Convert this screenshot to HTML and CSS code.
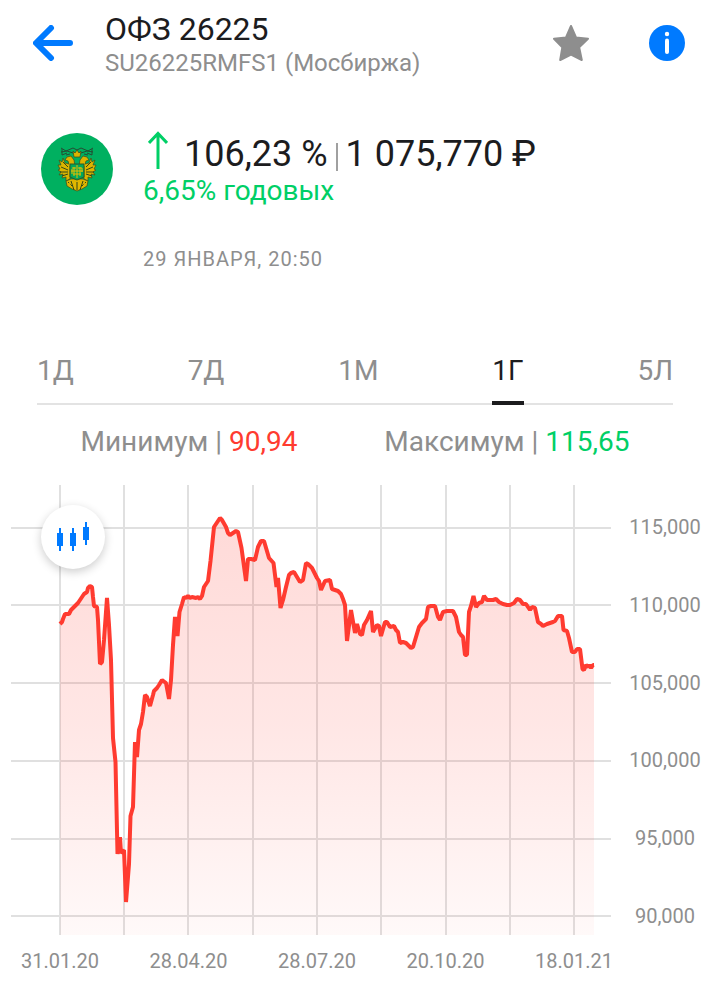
FILE: index.html
```html
<!DOCTYPE html>
<html lang="ru">
<head>
<meta charset="utf-8">
<meta name="viewport" content="width=device-width, initial-scale=1">
<title>ОФЗ 26225</title>
<link rel="stylesheet" href="styles.css">
</head>
<body>
<header class="topbar">
  <button class="icon-button" type="button" aria-label="Назад">
    <svg width="40" height="36" viewBox="0 0 40 36" fill="none" stroke="#007aff" stroke-width="6" stroke-linecap="round" stroke-linejoin="round"><path d="M37 18H4M18 3L3 18L18 33"/></svg>
  </button>
  <div class="heading">
    <h1 class="title">ОФЗ 26225</h1>
    <p class="subtitle">SU26225RMFS1 (Мосбиржа)</p>
  </div>
  <button class="icon-button" type="button" aria-label="В избранное">
    <svg width="36" height="36" viewBox="0 0 36 36" fill="#8e8e8e" stroke="#8e8e8e" stroke-width="2" stroke-linejoin="round"><path d="M18 1L23 12.5L35 13.7L26.200 22.400L28.800 35L18 29.500L7.200 35L9.300 22.400L1 13.700L13 12.500Z"/></svg>
  </button>
  <button class="icon-button info" type="button" aria-label="Информация">
    <svg width="36" height="36" viewBox="0 0 36 36"><circle cx="18" cy="18" r="18" fill="#007aff"/><circle cx="18" cy="9" r="2.200" fill="#fff"/><path d="M18 15.500V27" stroke="#fff" stroke-width="4" stroke-linecap="round"/></svg>
  </button>
</header>

<main>
  <section class="quote">
    <svg class="emblem" width="72" height="72" viewBox="0 0 72 72" aria-hidden="true">
      <circle cx="36" cy="36" r="36" fill="#00b060"/>
      <path d="M20 15L25 18L32 15L36 17L40 15L47 18L52 15M20 19L26 18L32 20H40L46 18L52 19M21 16V22L26 20M51 16V22L46 20M25 22L29 21M43 21L47 22" fill="none" stroke="#254c32" stroke-width="1"/>
      <g fill="#dcb400" stroke="#3f4a18" stroke-width=".7">
        <path d="M32 18L34 20L36 17L38 20L40 18L39 24H33Z"/>
        <path d="M34 33L33 27L30 23L26 24L24 27L27 28L28 31L24 30L22 25L21 29L18 27L20 32L17 32L19 36L17 37L20 39L18 42L22 41L21 45L25 44L25 48L29 46V33Z"/>
        <path d="M38 33L39 27L42 23L46 24L48 27L45 28L44 31L48 30L50 25L51 29L54 27L52 32L55 32L53 36L55 37L52 39L54 42L50 41L51 45L47 44L47 48L43 46V33Z"/>
        <path d="M25 48L30 46H42L47 48L46 53L41 56L36 58L31 56L26 53Z"/>
      </g>
      <path d="M20 34L27 37M19 39L27 39M21 43L27 41M22 29L27 34M52 34L45 37M53 39L45 39M51 43L45 41M50 29L45 34M27 49L31 53M45 49L41 53M30 48L33 57M42 48L39 57M36 49V57" fill="none" stroke="#344818" stroke-width="1"/>
      <path d="M29 31H43V44L36 47L29 44Z" fill="#00a85a" stroke="#2d5a2a"/>
      <path d="M36 32V45M33 34V43M39 34V43M31 36V41M30 38H42M31 35H35M37 35H41V39M32 41H40M28 50L31 55M34 49L34 56M38 49V56M44 50L41 55" fill="none" stroke="#e8bd00" stroke-width="1"/>
    </svg>
    <div class="figures">
      <p class="price">
        <svg class="rise" width="20" height="38" viewBox="0 0 20 38" fill="none" stroke="#00cf66" stroke-width="3" role="img" aria-label="Рост"><path d="M10 38V3M1 12L10 2.500L19 12"/></svg>
        <span>106,23 %</span><span class="bar"></span><span>1 075,770 ₽</span>
      </p>
      <p class="yield">6,65% годовых</p>
      <p class="stamp">29 ЯНВАРЯ, 20:50</p>
    </div>
  </section>

  <nav class="tabs" aria-label="Период">
    <button class="tab" type="button">1Д</button>
    <button class="tab" type="button">7Д</button>
    <button class="tab" type="button">1М</button>
    <button class="tab active" type="button" aria-current="true">1Г</button>
    <button class="tab" type="button">5Л</button>
  </nav>

  <div class="range">
    <p>Минимум | <span class="low">90,94</span></p>
    <p>Максимум | <span class="high">115,65</span></p>
  </div>

  <section class="chart">
    <div class="plot">
      <svg class="lines" viewBox="11 485 600 450" role="img" aria-label="График за год">
        <defs>
          <linearGradient id="fade" gradientUnits="userSpaceOnUse" x1="0" y1="515" x2="0" y2="935"><stop offset="0" stop-color="#ff3b30" stop-opacity=".19"/><stop offset=".5" stop-color="#ff3b30" stop-opacity=".125"/><stop offset="1" stop-color="#ff3b30" stop-opacity=".03"/></linearGradient>
        </defs>
        <path d="M11 528H611M11 605H611M11 683H611M11 761H611M11 839H611M11 916H611M60 485V935M124 485V935M188 485V935M253 485V935M317 485V935M381 485V935M446 485V935M510 485V935M574 485V935" stroke="#e0e0e0" stroke-width="2"/>
        <path id="area" fill="url(#fade)"/>
        <path id="trend" fill="none" stroke="#ff3b30" stroke-width="4" stroke-linejoin="bevel"/>
      </svg>
      <button class="mode" type="button" aria-label="Свечной график">
        <svg width="34" height="32" viewBox="0 0 34 32" fill="#007aff"><path d="M3 7h2v5h2v13h-2v5h-2v-5h-2v-13h2zM16 7h2v5h2v13h-2v5h-2v-5h-2v-13h2zM29 1h2v5h2v13h-2v5h-2v-5h-2v-13h2z"/></svg>
      </button>
    </div>
    <div class="y-axis"><span>115,000</span><span>110,000</span><span>105,000</span><span>100,000</span><span>95,000</span><span>90,000</span></div>
    <div class="x-axis"><span>31.01.20</span><span>28.04.20</span><span>28.07.20</span><span>20.10.20</span><span>18.01.21</span></div>
  </section>
</main>
<script src="chart.js"></script>
</body>
</html>
```
FILE: styles.css
```css
* { box-sizing: border-box; }
body { margin: 0; background: #fff; color: #1c1c1e; font-family: Roboto, "Noto Sans", sans-serif; }
h1, p { margin: 0; font-weight: 400; }
button { padding: 0; border: 0; background: none; color: inherit; font: inherit; cursor: pointer; }
svg { display: block; }

.topbar { display: flex; align-items: flex-start; padding: 12px 28px 8px 33px; }
.heading { flex: 1; padding-left: 32px; }
.title { font-size: 32px; line-height: 35px; }
.subtitle { font-size: 24px; line-height: 32px; color: #8e8e8e; }
.icon-button { flex: none; margin-top: 13px; }
.info { margin-left: 60px; }

.quote { display: flex; gap: 30px; padding: 46px 40px 0 41px; }
.emblem { flex: none; }
.price { display: flex; align-items: flex-start; font-size: 36px; line-height: 42px; }
.rise { flex: none; margin: -2px 16px 0 5px; }
.bar { width: 2px; height: 28px; margin: 10px 8px 0; background: #a0a0a0; }
.yield { font-size: 28px; line-height: 32px; color: #00cf66; }
.stamp { margin-top: 40px; font-size: 20px; line-height: 24px; letter-spacing: 1px; color: #8e8e8e; }

.tabs { display: flex; justify-content: space-between; margin: 80px 40px 0 37px; border-bottom: 2px solid #e3e3e3; }
.tab { height: 54px; margin-bottom: -2px; padding-bottom: 10px; border-bottom: 4px solid transparent; font-size: 28px; line-height: 34px; color: #8e8e8e; }
.tab.active { border-color: #1c1c1e; color: #1c1c1e; }

.range { display: flex; justify-content: space-around; margin: 20px 40px 26px 37px; font-size: 28px; line-height: 34px; color: #8e8e8e; }
.low { color: #ff3b30; }
.high { color: #00cf66; }

.chart { display: grid; grid-template-columns: 1fr 102px; padding-left: 11px; font-size: 20px; line-height: 24px; color: #8e8e8e; }
.plot { position: relative; }
.lines { width: 100%; height: auto; }
.mode { position: absolute; top: 20px; left: 30px; display: grid; place-items: center; width: 64px; height: 64px; border-radius: 50%; background: #fff; box-shadow: 0 3px 10px rgba(0, 0, 0, .2); }
.y-axis { display: flex; flex-direction: column; justify-content: space-between; align-items: center; padding: 30px 0 7px 6px; }
.x-axis { display: flex; justify-content: space-between; margin-right: -2px; padding: 14px 0 16px 10px; }
```
FILE: chart.js
```js
const points = [
  60,624, 62,622, 63,619, 65,614, 69,614, 71,610, 73,608, 76,605, 78,603, 80,600, 82,597, 84,594, 87,592, 88,588, 90,586, 92,587, 93,597, 94,606, 97,607, 98,620, 100,664, 102,662, 104,640, 107,598, 109,625, 111,660,
  113,738, 115.5,762, 117.5,854, 120,837, 121,853, 124,850, 126,902, 129,864, 130.5,816, 133,807, 135,742, 137,757, 139,730, 141,724, 143,712, 145,695, 147,697, 150,706, 153,695, 154,691, 157,688, 159,685, 162,680, 166,683, 169,699, 171,680, 173,645, 175,617, 177.500,636, 179.500,612, 182,604, 184,597,
  186,598, 188,596, 190,598, 192,597, 196,598, 198,597, 200,599, 202,596, 204,587, 208,581, 210.500,561, 214,527, 218,521, 220,518, 222,520, 226,527, 228,533, 230,535, 233,533, 236,531, 238,532, 241.500,548, 246,581, 248,559, 251,559, 255,560, 258,547, 261,541, 264,541, 269,558, 273.500,563, 276.500,587, 278,578, 280.500,608, 283,600, 286,587, 289,575, 291,573, 294,572, 297,577, 300,582, 303,580, 306,563, 308,564, 312,568, 314,572, 317,578, 319,581, 321,590, 325,581, 330,580, 332,589, 335,590, 338,591, 341,594, 343,599, 345,605, 347,641, 351,610, 355,633, 357,624, 360,634, 362,635, 364,625, 367,620, 371,611, 373,632, 377,625, 379,626, 381,636, 385,622, 387,622, 390,627, 394,626, 396,630, 398,632,
  400,643, 403,642, 406,643, 409,646, 411,648, 413,647, 416,637, 419,627, 422,623, 426,619, 428,607, 431,606, 435,606, 438,617, 440,620, 443,612, 447,611, 453,611, 456,617, 459,632, 461,635, 463,637, 465,655, 467,655, 469,612, 471,606, 473.500,596, 476,607, 479,603, 482,602, 484,596, 487,600, 490,600, 493,600, 496,599, 499,602, 503,604, 507,605, 510,605, 514,603, 517,599, 520,600, 523,604, 526,604, 530,610, 532,607, 535,608, 538,622, 541,624, 543,626, 547,624, 550,623, 553,622, 555,621, 558,616, 562,616, 563.500,630, 567,631, 569,638, 572,652, 575,652, 577,649, 580,649, 582.500,669, 584,670, 586,665, 588,667, 589,665, 591,668, 593,665, 594,665
];
let line = "";
for (let i = 0; i < points.length; i += 2) line += (i ? "L" : "M") + points[i] + " " + points[i + 1];
document.getElementById("trend").setAttribute("d", line);
document.getElementById("area").setAttribute("d", line + "V935H60Z");
```
